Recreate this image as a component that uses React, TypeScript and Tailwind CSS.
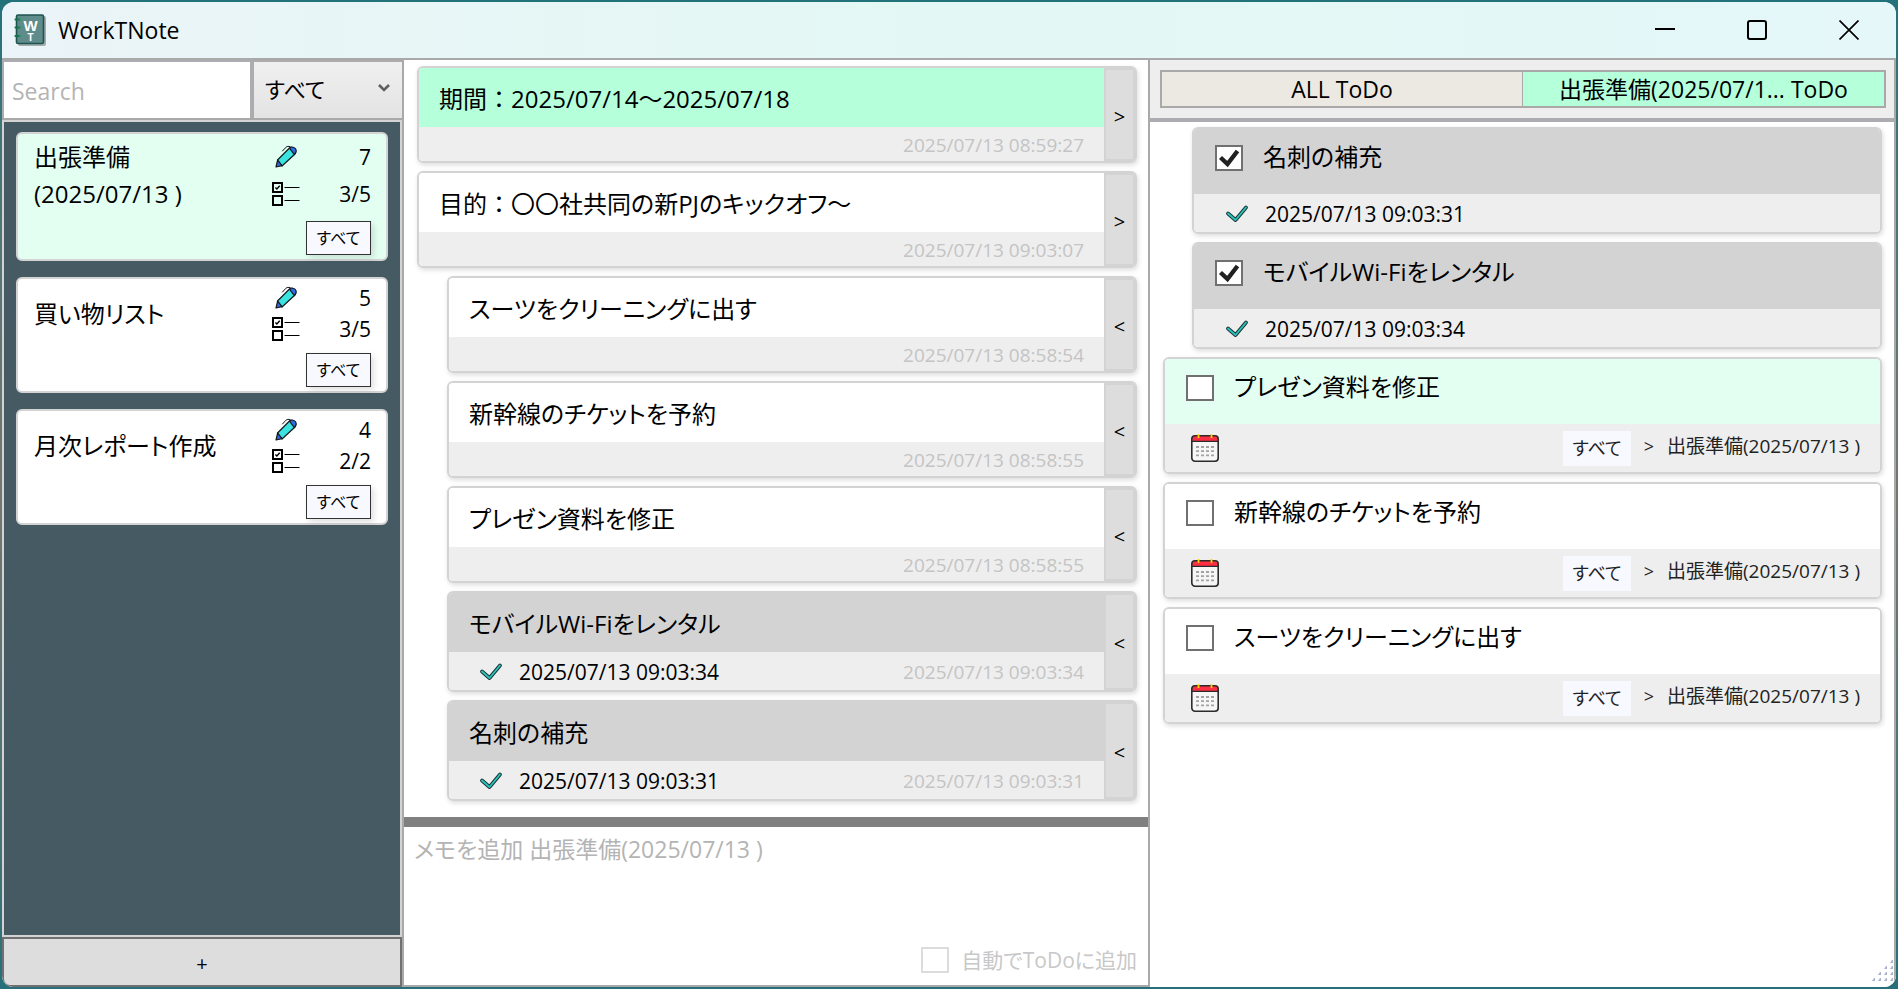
import { Fragment, useState } from "react";

type Note = { title: string; memos: number; todos: string; active?: boolean };
type Memo = { text: string; date: string; indent?: boolean; done?: string; active?: boolean };
type Todo = { text: string; done?: string; active?: boolean };

const notes: Note[] = [
  { title: "出張準備 (2025/07/13 )", memos: 7, todos: "3/5", active: true },
  { title: "買い物リスト", memos: 5, todos: "3/5" },
  { title: "月次レポート作成", memos: 4, todos: "2/2" },
];

const memos: Memo[] = [
  { text: "期間：2025/07/14～2025/07/18", date: "2025/07/13 08:59:27", active: true },
  { text: "目的：〇〇社共同の新PJのキックオフ～", date: "2025/07/13 09:03:07" },
  { text: "スーツをクリーニングに出す", date: "2025/07/13 08:58:54", indent: true },
  { text: "新幹線のチケットを予約", date: "2025/07/13 08:58:55", indent: true },
  { text: "プレゼン資料を修正", date: "2025/07/13 08:58:55", indent: true },
  { text: "モバイルWi-Fiをレンタル", date: "2025/07/13 09:03:34", indent: true, done: "2025/07/13 09:03:34" },
  { text: "名刺の補充", date: "2025/07/13 09:03:31", indent: true, done: "2025/07/13 09:03:31" },
];

const todos: Todo[] = [
  { text: "名刺の補充", done: "2025/07/13 09:03:31" },
  { text: "モバイルWi-Fiをレンタル", done: "2025/07/13 09:03:34" },
  { text: "プレゼン資料を修正", active: true },
  { text: "新幹線のチケットを予約" },
  { text: "スーツをクリーニングに出す" },
];

const CARD = "overflow-hidden rounded-md border-2 border-[#d3d3d3] shadow-[1px_2px_5px_rgba(0,0,0,0.14)]";

/* Proportional kana, with full-width punctuation left at its full width. */
function Jp({ children }: { children: string }) {
  return (
    <>
      {children.split(/([：～〇]+)/).map((part, i) =>
        i % 2 ? (
          <Fragment key={i}>{part}</Fragment>
        ) : (
          <span key={i} className="[font-feature-settings:'palt']">{part}</span>
        ),
      )}
    </>
  );
}

function Logo() {
  return (
    <svg width="32" height="32" viewBox="0 0 32 32" aria-hidden="true">
      <rect x="4" y="2" width="28" height="30" rx="2" fill="#a4acac" />
      <rect x="2.5" y="1" width="27" height="28.5" rx="1.5" fill="#5f8c8a" stroke="#1f5350" strokeWidth="1.6" />
      <g stroke="#13734a" strokeWidth="2.2" strokeLinecap="round">
        <path d="M1.5 5.5h4.5M1.5 13.5h4.5M1.5 22h4.5" />
      </g>
      <g fill="#2f9c6c">
        <circle cx="6" cy="5.5" r="1" />
        <circle cx="6" cy="13.5" r="1" />
        <circle cx="6" cy="22" r="1" />
      </g>
      <text x="16.5" y="17" textAnchor="middle" fontSize="15" fontWeight="700" fill="#fff" fontFamily="Liberation Sans, sans-serif">W</text>
      <text x="16.5" y="26.5" textAnchor="middle" fontSize="10" fontWeight="700" fill="#fff" fontFamily="Liberation Sans, sans-serif">T</text>
    </svg>
  );
}

function Pencil() {
  return (
    <svg width="24" height="24" viewBox="0 0 24 24" aria-hidden="true" strokeLinejoin="round" strokeLinecap="round">
      <path d="M3.5 15 15 3.5c3-3 9 1.5 6 5.5L8 21z" fill="#3be3e0" stroke="#15181c" strokeWidth="1.2" />
      <path d="M15.5 3.2c2.2-2.6 8.2-.4 6.2 4.4l-1.4 2z" fill="#2f6be0" stroke="#15181c" strokeWidth="1.1" />
      <path d="M3.6 15.2 2 22l6-1.4z" fill="#2f6be0" stroke="#15181c" strokeWidth="1.2" />
      <path d="M8.5 6 12 2.2c1-1 2.5-1 4-.6" fill="none" stroke="#15181c" strokeWidth="1" />
    </svg>
  );
}

function Checklist() {
  return (
    <svg width="28" height="26" viewBox="0 0 28 26" aria-hidden="true" fill="none" stroke="#000">
      <rect x="1" y="2" width="9" height="9" strokeWidth="2" />
      <rect x="1" y="15" width="9" height="9" strokeWidth="2" />
      <path d="M3.4 6.400l1.500 1.600 2.800-3.200" strokeWidth="1.400" />
      <path d="M12.500 6.500h15M12.500 19.500h15" strokeWidth="1" />
    </svg>
  );
}

function DoneMark() {
  return (
    <svg width="24" height="20" viewBox="0 0 24 20" aria-hidden="true" fill="none" strokeLinecap="round" strokeLinejoin="round">
      <path d="M3 9.500 10.500 16 21 3.500" stroke="#1c3638" strokeWidth="3.800" />
      <path d="M3 9.500 10.500 16 21 3.500" stroke="#2bc4bd" strokeWidth="1.800" />
    </svg>
  );
}

function Calendar() {
  return (
    <svg width="30" height="30" viewBox="0 0 30 30" aria-hidden="true">
      <rect x="1.8" y="2.8" width="26.4" height="25.4" rx="3.2" fill="#f6f6f6" />
      <path d="M1.8 8V6a3.2 3.2 0 0 1 3.2-3.2h20A3.2 3.2 0 0 1 28.2 6v2z" fill="#ff2f43" />
      <rect x="1.8" y="2.8" width="26.4" height="25.4" rx="3.2" fill="none" stroke="#2b2b2b" strokeWidth="1.6" />
      <path d="M2 8.4h26" stroke="#2b2b2b" strokeWidth="1.4" />
      <path d="M8.5 1v4M21.5 1v4" stroke="#ffd400" strokeWidth="1.8" />
      <path d="M6 14h19M6 18.200h19M6 22.400h19" stroke="#a3a3a3" strokeWidth="1.8" strokeDasharray="3 2" />
    </svg>
  );
}

function CheckBox({ id, checked, onChange, faint }: { id: string; checked: boolean; onChange: () => void; faint?: boolean }) {
  return (
    <span className="grid h-[26px] w-7 shrink-0">
      <input
        id={id}
        type="checkbox"
        checked={checked}
        onChange={onChange}
        className={`col-start-1 row-start-1 m-0 h-full w-full appearance-none border-2 bg-white ${faint ? "border-[#dcdcdc]" : "border-[#707070]"}`}
      />
      {checked && (
        <svg viewBox="0 0 28 26" aria-hidden="true" className="pointer-events-none col-start-1 row-start-1 h-full w-full">
          <path d="M5.500 12.500 12.500 19 22.500 6" fill="none" stroke="#212121" strokeWidth="4.400" />
        </svg>
      )}
    </span>
  );
}

function TitleBar() {
  return (
    <header className="flex h-[58px] shrink-0 items-center border-b-2 border-[#a9a9a9] bg-linear-to-r from-[#ebf4f8] via-[#e3f8f4] to-[#e5f7f9] pr-px pl-3">
      <Logo />
      <h1 className="flex-1 pl-3 text-[23px] text-black">WorkTNote</h1>
      <button type="button" aria-label="Minimize" className="flex h-14 w-[92px] items-center justify-center">
        <svg width="20" height="20" viewBox="0 0 20 20"><path d="M0 9h20" stroke="#000" strokeWidth="2" /></svg>
      </button>
      <button type="button" aria-label="Maximize" className="flex h-14 w-[92px] items-center justify-center">
        <svg width="20" height="20" viewBox="0 0 20 20"><rect x="1" y="1" width="18" height="18" rx="2" fill="none" stroke="#000" strokeWidth="2" /></svg>
      </button>
      <button type="button" aria-label="Close" className="flex h-14 w-[92px] items-center justify-center">
        <svg width="20" height="20" viewBox="0 0 20 20"><path d="M.5.5l19 19M19.500.5l-19 19" stroke="#000" strokeWidth="1.7" /></svg>
      </button>
    </header>
  );
}

function NoteCard({ note }: { note: Note }) {
  return (
    <li className={`flex flex-col gap-[9px] rounded-md border-2 border-[#d3d3d3] py-1 pr-[15px] pl-4 text-black ${note.active ? "bg-[#e3fff1]" : "bg-white"}`}>
      <div className="flex min-h-[61px]">
        <h2 className="w-[202px] self-center text-[24px] leading-[37px]"><Jp>{note.title}</Jp></h2>
        <div className="grid flex-1 grid-cols-[28px_1fr] grid-rows-2 items-center pl-9 text-[21px] leading-[30px]">
          <span className="justify-self-center"><Pencil /></span>
          <span className="text-right">{note.memos}</span>
          <Checklist />
          <span className="text-right">{note.todos}</span>
        </div>
      </div>
      <button type="button" className="h-[34px] w-[65px] self-end border border-[#333] bg-[#f8f8ff] text-base shadow-[3px_3px_6px_rgba(0,0,0,0.12)]">
        <Jp>すべて</Jp>
      </button>
    </li>
  );
}

function Sidebar() {
  return (
    <aside className="flex min-h-0 flex-col border-r-2 border-[#a9a9a9] bg-[#d3d3d3]">
      <div className="flex h-[60px] shrink-0 border-b-2 border-[#a9a9a9]">
        <input
          type="text"
          aria-label="Search"
          placeholder="Search"
          className="w-[250px] border-2 border-b-0 border-[#abadb3] bg-white pt-0.5 pl-2 text-[23px] text-black outline-none placeholder:text-[#b4b4b4]"
        />
        <div className="grid flex-1 border-2 border-r-0 border-b-0 border-[#acacac] bg-linear-to-b from-[#f0f0f0] to-[#e3e3e3]">
          <select aria-label="Category" className="col-start-1 row-start-1 appearance-none pb-0.5 pl-[11px] text-[22px] text-black outline-none [font-feature-settings:'palt']">
            <option>すべて</option>
          </select>
          <svg width="12" height="10" viewBox="0 0 12 10" aria-hidden="true" className="pointer-events-none col-start-1 row-start-1 mr-3 mb-1 self-center justify-self-end">
            <path d="M1 2l5 5 5-5" fill="none" stroke="#606060" strokeWidth="2.600" />
          </svg>
        </div>
      </div>
      <ul className="min-h-0 flex-1 space-y-4 overflow-hidden border-2 border-[#d3d3d3] bg-[#465a64] px-3 pt-[10px]">
        {notes.map((n) => (
          <NoteCard key={n.title} note={n} />
        ))}
      </ul>
      <button type="button" aria-label="Add note" className="h-[50px] shrink-0 rounded-bl-lg border-2 border-[#707070] bg-[#ddd] pt-1 text-xl text-black">
        +
      </button>
    </aside>
  );
}

function MemoCard({ memo }: { memo: Memo }) {
  const head = memo.done ? "bg-[#d3d3d3]" : memo.active ? "bg-[#b5ffdb]" : "bg-white";
  return (
    <li className={`flex ${CARD} ${memo.indent ? "ml-[30px]" : ""}`}>
      <div className="min-w-0 flex-1">
        <div className={`h-[59px] truncate px-5 text-[24px] leading-[61px] text-black ${head}`}><Jp>{memo.text}</Jp></div>
        <div className={`flex items-center bg-[#eee] pt-0.5 pr-5 pl-[30px] ${memo.done ? "h-[38px]" : "h-[34px]"}`}>
          {memo.done && (
            <>
              <DoneMark />
              <time className="pl-4 text-[21px] leading-7 text-black">{memo.done}</time>
            </>
          )}
          <time className="ml-auto text-[19px] leading-7 text-[#c4c4c4]">{memo.date}</time>
        </div>
      </div>
      <button
        type="button"
        aria-label={memo.indent ? "Remove from ToDo" : "Add to ToDo"}
        className="w-[31px] border-2 border-[#d3d3d3] bg-[#ddd] pt-1 text-xl text-black"
      >
        {memo.indent ? "<" : ">"}
      </button>
    </li>
  );
}

function MemoPane() {
  const [auto, setAuto] = useState(false);
  return (
    <main className="flex min-h-0 flex-col border-r-2 border-[#a9a9a9] bg-white">
      <ul className="min-h-0 flex-1 space-y-2 overflow-hidden pt-1.5 pr-[11px] pl-[13px]">
        {memos.map((m) => (
          <MemoCard key={m.text} memo={m} />
        ))}
      </ul>
      <div className="flex h-[170px] shrink-0 flex-col border-t-[10px] border-b-2 border-t-[#808080] border-b-[#a9a9a9]">
        <textarea
          aria-label="メモを追加"
          placeholder="メモを追加 出張準備(2025/07/13 )"
          className="min-h-0 flex-1 resize-none px-[10px] pt-1 text-[23px] leading-9 text-black outline-none placeholder:text-[#b4b4b4] [font-feature-settings:'palt']"
        />
        <div className="flex items-center justify-end gap-3 pr-[11px] pb-[9px] text-[#c8c8c8]">
          <CheckBox id="auto" checked={auto} onChange={() => setAuto(!auto)} faint />
          <label htmlFor="auto" className="text-[21px] leading-8"><Jp>自動でToDoに追加</Jp></label>
        </div>
      </div>
    </main>
  );
}

function TodoCard({ todo, id }: { todo: Todo; id: string }) {
  const [checked, setChecked] = useState(!!todo.done);
  const head = todo.done ? "bg-[#d3d3d3]" : todo.active ? "bg-[#e3fff1]" : "bg-white";
  return (
    <li className={`${CARD} ${todo.done ? "ml-[29px]" : ""}`}>
      <div className={`flex h-[65px] items-start gap-5 pt-4 pl-[21px] ${head}`}>
        <CheckBox id={id} checked={checked} onChange={() => setChecked(!checked)} />
        <label htmlFor={id} className="text-[24px] leading-6 text-black"><Jp>{todo.text}</Jp></label>
      </div>
      {todo.done ? (
        <div className="flex h-[38px] items-center bg-[#eee] pt-0.5 pl-[31px] text-[21px] leading-7 text-black">
          <DoneMark />
          <time className="pl-4">{todo.done}</time>
        </div>
      ) : (
        <div className="flex h-12 items-center bg-[#eee] pr-5 pl-[25px] text-[19px] text-[#222]">
          <button type="button" aria-label="期限"><Calendar /></button>
          <button type="button" className="ml-auto h-[35px] w-[68px] bg-[#f8f8ff] text-lg"><Jp>すべて</Jp></button>
          <span className="w-9 pb-1 text-center text-lg">&gt;</span>
          <a href="#note" className="pb-1"><Jp>出張準備(2025/07/13 )</Jp></a>
        </div>
      )}
    </li>
  );
}

function TodoPane() {
  return (
    <section className="flex min-h-0 flex-col border-r-2 border-[#a9a9a9] bg-white">
      <div className="h-[62px] shrink-0 border-b-4 border-[#abadb3] bg-[#eee] pt-[10px] pr-2 pl-[10px]">
        <div className="grid h-[38px] grid-cols-2 border-2 border-[#a9a9a9] text-[23px] leading-[34px] text-black">
          <button type="button" className="border-r border-[#a9a9a9] bg-[#ece9e2]">ALL ToDo</button>
          <button type="button" className="bg-[#b5ffdb]">出張準備(2025/07/1... ToDo</button>
        </div>
      </div>
      <ul className="min-h-0 flex-1 space-y-2 overflow-hidden pt-[5px] pr-3 pl-[13px]">
        {todos.map((t, i) => (
          <TodoCard key={t.text} todo={t} id={`todo-${i}`} />
        ))}
      </ul>
      <div className="flex shrink-0 justify-end pb-1">
        <svg width="22" height="24" viewBox="0 0 22 24" aria-hidden="true" fill="#a9b4cb">
          {[
            [18, 0], [12, 6], [18, 6], [6, 12], [12, 12], [18, 12], [0, 18], [6, 18], [12, 18], [18, 18],
          ].map(([x, y]) => (
            <path key={`${x}-${y}`} d={`M${x} ${y + 4}l2-3h1v3z`} />
          ))}
        </svg>
      </div>
    </section>
  );
}

export default function App() {
  return (
    <div className="h-screen bg-linear-to-b from-[#22727a] via-[#74776f] to-[#26707a] p-[2px] [font-family:'Open_Sans','Noto_Sans_CJK_JP',sans-serif]">
      <div className="flex h-full flex-col overflow-hidden rounded-xl bg-white">
        <TitleBar />
        <div className="grid min-h-0 flex-1 grid-cols-[402px_minmax(0,1fr)_minmax(0,1fr)]">
          <Sidebar />
          <MemoPane />
          <TodoPane />
        </div>
      </div>
    </div>
  );
}
